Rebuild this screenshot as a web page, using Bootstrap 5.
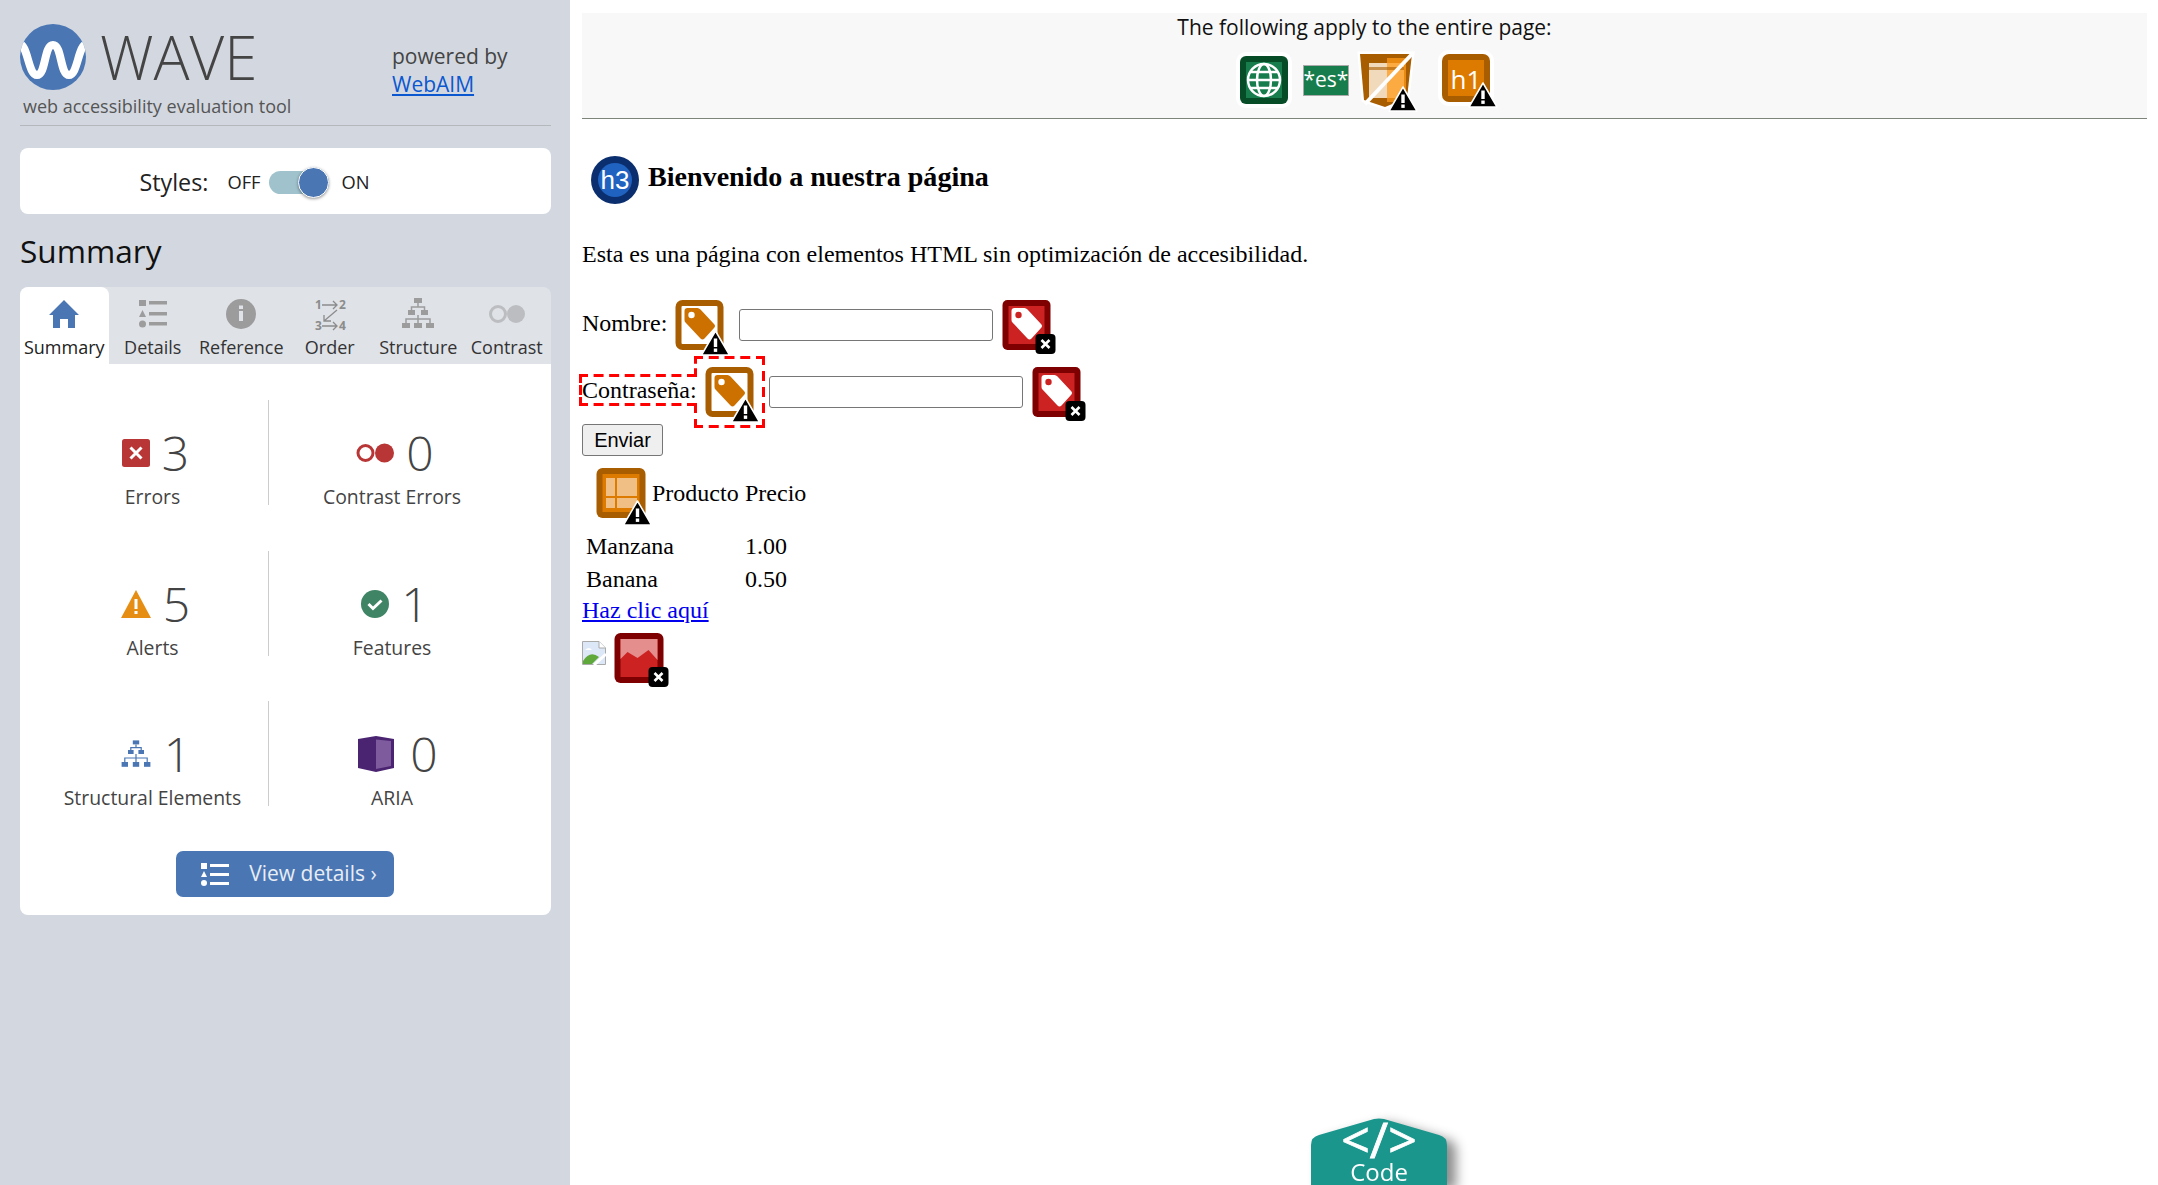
<!DOCTYPE html>
<html lang="en">
<head>
    <meta charset="UTF-8">
    <meta name="viewport" content="width=device-width, initial-scale=1.0">
    <title>WAVE Report</title>
    <link rel="stylesheet" href="https://cdn.jsdelivr.net/npm/bootstrap@5.3.0/dist/css/bootstrap.min.css">
    <style>
        html, body { height: 100%; overflow: hidden; }
        body { font-family: "Liberation Serif", serif; font-size: 24px; color: #000; background: #fff; }
        .wave-shell { height: 1185px; position: relative; }

        /* sidebar */
        .wave-side { width: 570px; flex: none; background: #d3d8e0; padding: 24px 19px 0 20px; font-family: "Open Sans", sans-serif; color: #444; }
        .brand-row { height: 102px; border-bottom: 1px solid #b4b8bd; }
        .brand-left { width: 372px; }
        .brand-top { height: 64px; }
        .brand-name { font-size: 60px; font-weight: 300; line-height: 66px; margin-left: 14px; color: #444; }
        .brand-sub { font-size: 18px; line-height: 24px; margin: 6px 0 0 3px; color: #555; }
        .brand-right { font-size: 21px; line-height: 28px; padding-top: 18px; color: #444; }
        .brand-right a { color: #0b57d0; display: block; }
        .style-box { height: 66px; margin-top: 22px; padding: 2px 62px 0 0; background: #fff; border-radius: 8px; color: #222; }
        .style-word { font-size: 23.3px; margin-right: 19px; }
        .style-state { font-size: 18.3px; }
        .style-track { width: 60px; height: 23px; margin: 0 13px 0 8px; background: #9fc2cc; border-radius: 12px; position: relative; }
        .style-knob { position: absolute; width: 31px; height: 31px; right: 0; top: -4px; background: #4a76b4; border-radius: 50%; border: 1px solid #fff; box-shadow: 0 1px 3px rgba(0,0,0,.4); }
        .side-title { font-size: 31.6px; line-height: 40px; margin: 17px 0 16px; color: #111; font-weight: 400; }
        .tab-bar { background: #dfe2e7; border-radius: 8px 8px 0 0; flex-wrap: nowrap; height: 77px; }
        .tab-bar .nav-link { width: 88.5px; padding: 10px 0 0; text-align: center; font-size: 18px; line-height: 24px; color: #333; white-space: nowrap; border-radius: 8px 8px 0 0; }
        .tab-bar .nav-link.active { background: #fff; color: #222; }
        .tab-bar svg { display: block; margin: 0 auto 2px; width: 40px; height: 36px; }
        .stat-panel { background: #fff; border-radius: 0 0 8px 8px; height: 551px; padding: 36px 0 0 17px; }
        .stat-grid { display: grid; grid-template-columns: 232px 246px; row-gap: 45.5px; }
        .stat-cell { height: 105px; text-align: center; padding-top: 28px; }
        .stat-cell.with-rule { border-right: 1px solid #ccc; }
        .stat-line { padding-left: 6px; }
        .stat-num { font-size: 48px; font-weight: 300; line-height: 50px; color: #444; }
        .stat-name { font-size: 19.4px; line-height: 26px; margin-top: 6px; color: #444; }
        .stat-line svg { flex: none; }
        .aria-line { padding-left: 12px; }
        .aria-num { margin-left: 8px; }
        .details-btn { width: 218px; height: 46px; margin: 45px 0 0 139px; padding: 0 0 0 8px; display: flex; align-items: center; justify-content: center; gap: 20px; background: #4a76b4; border: 0; border-radius: 7px; color: #e8edf4; font-size: 21px; }

        /* page under test */
        .wave-page { flex: 1; padding: 13px 11px 0 12px; }
        .page-wide { height: 106px; background: #f8f8f8; border-bottom: 1px solid #7d857b; font-family: "Open Sans", sans-serif; font-size: 21px; line-height: 28px; text-align: center; color: #111; }
        .page-wide-icons { margin-top: 11px; height: 56px; padding-left: 6px; }
        .page-wide-icons svg { overflow: visible; }
        .lang-tag { width: 46px; height: 31px; background: #177d4c; border: 1px solid #aaa; color: #fff; font-size: 21px; line-height: 26px; margin: 0 10px 0 15px; }
        .icon-spacer { width: 27px; }
        .page-head { font-family: "Liberation Serif", serif; font-size: 28.08px; font-weight: 700; margin: 28px 0 0 8px; height: 60px; color: #000; line-height: 1; }
        .page-head svg { margin: 6px 8px 0 0; }
        .page-text { margin: 32px 0 23px; line-height: 30px; }
        .form-row-raw { line-height: normal; height: 67px; }
        .form-row-raw label { display: inline; }
        .form-row-raw svg { vertical-align: middle; }
        .raw-input { width: 254px; height: 32px; margin-left: 1px; border: 1px solid #767676; border-radius: 3px; vertical-align: middle; background: #fff; }
        .err-icon { margin-left: -5px; }
        .flag-label { outline: 3px dashed #f00; }
        .raw-btn { display: block; width: 81px; height: 32px; margin-top: -2px; padding: 0; border: 1px solid #767676; border-radius: 3px; background: #efefef; font-family: "Liberation Sans", sans-serif; font-size: 20px; color: #000; }
        .raw-table { margin: 1px 0 0 1px; border-collapse: separate; border-spacing: 3px; }
        .raw-table th { font-weight: 400; padding: 0 0 2px; }
        .raw-table th svg { margin: 0 -1px 0 2px; }
        .raw-table td { padding: 0; line-height: 30px; }
        .raw-table th.first { width: 156px; }
        .raw-link { color: #00e; text-decoration: underline; display: block; line-height: 30px; margin-top: -2px; }
        .img-row { height: 66px; }
        .broken-pic { margin-top: 16px; }
        .code-tab { position: absolute; left: 1311px; bottom: 0; width: 150px; height: 67px; overflow: visible; filter: drop-shadow(9px 5px 6px rgba(0,0,0,.45)); }
    </style>
</head>
<body>
    <svg width="0" height="0" class="position-absolute">
        <defs>
            <g id="warn">
                <path d="M13 0 L27 24 H-1 Z" fill="#000" stroke="#fff" stroke-width="1.5" stroke-linejoin="round"/>
                <rect x="11.3" y="7.5" width="3.4" height="8.5" fill="#fff"/>
                <rect x="11.3" y="17.5" width="3.4" height="3.4" fill="#fff"/>
            </g>
            <g id="xbadge">
                <rect x="0" y="0" width="20" height="20" rx="4" fill="#000"/>
                <path d="M6 6 L14 14 M14 6 L6 14" stroke="#fff" stroke-width="2.6"/>
            </g>
            <path id="tagshape" d="M12 8 H22 Q23.500 8 25 9.500 L38.500 24 Q40.500 26 38.500 28 L29 38.500 Q27 40.500 25 38.500 L10 22.500 Q9 21.500 9 20 V11 Q9 8 12 8 Z"/>
            <symbol id="tag-alert" viewBox="0 0 65 66">
                <g transform="translate(8.5 8)">
                    <rect x="3" y="3" width="42" height="44" rx="4" fill="#fff" stroke="#a85d00" stroke-width="6"/>
                    <use href="#tagshape" fill="#cc7000"/>
                    <circle cx="16" cy="15" r="3.200" fill="#fff"/>
                    <use href="#warn" transform="translate(27 31)"/>
                </g>
            </symbol>
            <symbol id="tag-error" viewBox="0 0 65 66">
                <g transform="translate(8.5 8)">
                    <rect width="48" height="50" rx="5" fill="#7f0000"/>
                    <rect x="6" y="6" width="36" height="38" fill="#cc2222"/>
                    <use href="#tagshape" fill="#fff"/>
                    <circle cx="16" cy="15" r="3.200" fill="#cc2222"/>
                    <use href="#xbadge" transform="translate(33 34)"/>
                </g>
            </symbol>
            <symbol id="table-alert" viewBox="0 0 65 66">
                <g transform="translate(8.5 8)">
                    <rect width="49" height="50" rx="6" fill="#a85d00"/>
                    <rect x="6" y="6" width="37" height="38" fill="#dd7b00"/>
                    <rect x="9.500" y="10" width="9" height="18" fill="#efbf85"/>
                    <rect x="20.500" y="10" width="20" height="18" fill="#efbf85"/>
                    <rect x="9.500" y="30" width="9" height="10" fill="#efbf85"/>
                    <rect x="20.500" y="30" width="20" height="10" fill="#efbf85"/>
                    <use href="#warn" transform="translate(28 33)"/>
                </g>
            </symbol>
            <symbol id="img-error" viewBox="0 0 65 66">
                <g transform="translate(8.5 8)">
                    <rect width="49" height="50" rx="6" fill="#7f0000"/>
                    <rect x="6" y="6" width="37" height="38" fill="#cc2222"/>
                    <path d="M6 6 H43 V27 L34 17 L23 25 L13 19 L6 26 Z" fill="#e58e8e"/>
                    <use href="#xbadge" transform="translate(34 34)"/>
                </g>
            </symbol>
        </defs>
    </svg>

    <div class="wave-shell d-flex">
        <aside class="wave-side">
            <div class="brand-row d-flex">
                <div class="brand-left">
                    <div class="brand-top d-flex">
                        <svg width="66" height="66" viewBox="0 0 66 66">
                            <defs><clipPath id="logo-clip"><circle cx="33" cy="33" r="33"/></clipPath></defs>
                            <circle cx="33" cy="33" r="33" fill="#4a76b4"/>
                            <path clip-path="url(#logo-clip)" d="M-1 20 C8 20 8 51 17 51 C26 51 24 21 33 21 C42 21 40 51 49 51 C58 51 58 20 67 20" fill="none" stroke="#fff" stroke-width="8"/>
                        </svg>
                        <span class="brand-name">WAVE</span>
                    </div>
                    <div class="brand-sub">web accessibility evaluation tool</div>
                </div>
                <div class="brand-right">powered by<a href="#">WebAIM</a></div>
            </div>

            <div class="style-box d-flex align-items-center justify-content-center">
                <span class="style-word">Styles:</span>
                <span class="style-state">OFF</span>
                <span class="style-track"><span class="style-knob"></span></span>
                <span class="style-state">ON</span>
            </div>

            <h2 class="side-title">Summary</h2>

            <nav class="nav tab-bar">
                <a class="nav-link active" href="#">
                    <svg viewBox="0 0 40 36"><path d="M20 3 L35 18 H31 V31 H24 V22 H16 V31 H9 V18 H5 Z" fill="#4a76b4"/></svg>
                    Summary
                </a>
                <a class="nav-link" href="#">
                    <svg viewBox="0 0 40 36" fill="#9c9c9c"><rect x="6" y="3" width="7" height="6"/><path d="M9.500 13 L13 20 H6 Z"/><circle cx="9.500" cy="27" r="3.500"/><rect x="16" y="4" width="18" height="3.500"/><rect x="16" y="15" width="18" height="3.500"/><rect x="16" y="25" width="18" height="3.500"/></svg>
                    Details
                </a>
                <a class="nav-link" href="#">
                    <svg viewBox="0 0 40 36"><circle cx="20" cy="17" r="15" fill="#9c9c9c"/><rect x="18" y="14" width="4" height="10" fill="#dfe2e7"/><rect x="18" y="8.500" width="4" height="3.500" fill="#dfe2e7"/></svg>
                    Reference
                </a>
                <a class="nav-link" href="#">
                    <svg viewBox="0 0 40 36">
                        <text x="5" y="12" font-family="Open Sans" font-weight="700" font-size="12" fill="#8c8c8c">1</text>
                        <text x="29" y="12" font-family="Open Sans" font-weight="700" font-size="12" fill="#8c8c8c">2</text>
                        <text x="5" y="33" font-family="Open Sans" font-weight="700" font-size="12" fill="#8c8c8c">3</text>
                        <text x="29" y="33" font-family="Open Sans" font-weight="700" font-size="12" fill="#8c8c8c">4</text>
                        <path d="M12 8 H27 M23 4 L27 8 L23 12 M12 29 H27 M23 25 L27 29 L23 33 M27 13 L14 24 M14 18 V24 H21" fill="none" stroke="#8c8c8c" stroke-width="1.300"/>
                    </svg>
                    Order
                </a>
                <a class="nav-link" href="#">
                    <svg viewBox="0 0 40 36" fill="#9c9c9c"><rect x="16" y="1" width="8" height="5"/><rect x="10" y="13" width="7" height="5"/><rect x="23" y="13" width="7" height="5"/><rect x="4" y="26" width="8" height="5"/><rect x="16" y="26" width="8" height="5"/><rect x="28" y="26" width="8" height="5"/><path d="M20 6 V10 M13.500 13 V10 H26.500 V13 M20 18 V26 M8 26 V22 H32 V26" fill="none" stroke="#9c9c9c" stroke-width="1.500"/></svg>
                    Structure
                </a>
                <a class="nav-link" href="#">
                    <svg viewBox="0 0 40 36"><circle cx="11" cy="17" r="7.500" fill="none" stroke="#bcbdc0" stroke-width="3"/><circle cx="29" cy="17" r="9" fill="#bcbdc0"/></svg>
                    Contrast
                </a>
            </nav>

            <div class="stat-panel">
                <div class="stat-grid">
                    <div class="stat-cell with-rule">
                        <div class="stat-line d-flex align-items-center justify-content-center gap-2">
                            <svg width="28" height="28" viewBox="0 0 28 28"><rect width="28" height="28" rx="2.500" fill="#b93636"/><path d="M8.500 8.500 L19.500 19.500 M19.500 8.500 L8.500 19.500" stroke="#fff" stroke-width="3"/></svg>
                            <span class="stat-num ms-1">3</span>
                        </div>
                        <div class="stat-name">Errors</div>
                    </div>
                    <div class="stat-cell">
                        <div class="stat-line d-flex align-items-center justify-content-center gap-2">
                            <svg width="38" height="20" viewBox="0 0 38 20"><circle cx="9.500" cy="10" r="7.500" fill="none" stroke="#b93636" stroke-width="3"/><circle cx="28.500" cy="10" r="9.500" fill="#b93636"/></svg>
                            <span class="stat-num ms-1">0</span>
                        </div>
                        <div class="stat-name">Contrast Errors</div>
                    </div>
                    <div class="stat-cell with-rule">
                        <div class="stat-line d-flex align-items-center justify-content-center gap-2">
                            <svg width="30" height="28" viewBox="0 0 30 28"><path d="M15 0 L30 28 H0 Z" fill="#e68e13"/><rect x="13.500" y="9" width="3" height="10" fill="#fff"/><rect x="13.500" y="21" width="3" height="3" fill="#fff"/></svg>
                            <span class="stat-num ms-1">5</span>
                        </div>
                        <div class="stat-name">Alerts</div>
                    </div>
                    <div class="stat-cell">
                        <div class="stat-line d-flex align-items-center justify-content-center gap-2">
                            <svg width="28" height="28" viewBox="0 0 28 28"><circle cx="14" cy="14" r="14" fill="#3f8465"/><path d="M7.500 14 L12 18.500 L20.500 10.500" fill="none" stroke="#fff" stroke-width="3"/></svg>
                            <span class="stat-num ms-1">1</span>
                        </div>
                        <div class="stat-name">Features</div>
                    </div>
                    <div class="stat-cell with-rule">
                        <div class="stat-line d-flex align-items-center justify-content-center gap-2">
                            <svg width="32" height="30" viewBox="0 0 40 36" fill="#4a76b4"><rect x="16" y="1" width="8" height="5"/><rect x="10" y="13" width="7" height="5"/><rect x="23" y="13" width="7" height="5"/><rect x="2" y="28" width="8" height="6"/><rect x="16" y="28" width="8" height="6"/><rect x="30" y="28" width="8" height="6"/><path d="M20 6 V10 M13.500 13 V10 H26.500 V13 M20 18 V28 M6 28 V23 H34 V28" fill="none" stroke="#4a76b4" stroke-width="1.500"/></svg>
                            <span class="stat-num ms-1">1</span>
                        </div>
                        <div class="stat-name">Structural Elements</div>
                    </div>
                    <div class="stat-cell">
                        <div class="stat-line aria-line d-flex align-items-center justify-content-center gap-2">
                            <svg width="36" height="36" viewBox="0 0 36 36"><path d="M0 3 L18 0 L36 3 V32 L18 36 L0 32 Z" fill="#4a2371"/><path d="M18 3.500 L33 5 V30 L18 33 Z" fill="#7d5b9c"/></svg>
                            <span class="stat-num aria-num">0</span>
                        </div>
                        <div class="stat-name">ARIA</div>
                    </div>
                </div>
                <button class="btn details-btn" type="button">
                    <svg width="28" height="23" viewBox="0 0 28 23" fill="#fff"><rect width="6" height="6"/><path d="M3 8 L6 14 H0 Z"/><circle cx="3" cy="20" r="3"/><rect x="9" y="1" width="19" height="3"/><rect x="9" y="10" width="19" height="3"/><rect x="9" y="19" width="19" height="3"/></svg>
                    <span>View details ›</span>
                </button>
            </div>
        </aside>

        <main class="wave-page">
            <div class="page-wide">
                The following apply to the entire page:
                <div class="page-wide-icons d-flex justify-content-center align-items-center">
                    <svg width="48" height="48" viewBox="0 0 48 48">
                        <rect width="48" height="48" rx="6" fill="#064d27" stroke="#fff" stroke-width="8" paint-order="stroke"/>
                        <rect x="6" y="6" width="36" height="36" fill="#177d4c"/>
                        <g fill="none" stroke="#fff" stroke-width="2.500">
                            <circle cx="24" cy="24" r="16"/><ellipse cx="24" cy="24" rx="7" ry="16"/>
                            <path d="M8 24 H40 M10 16 H38 M10 32 H38"/>
                        </g>
                    </svg>
                    <span class="lang-tag">*es*</span>
                    <svg width="56" height="56" viewBox="0 0 56 56">
                        <path d="M1 2 H53 L48 46 L26 55 L5 48 Z" fill="#a85d00" stroke="#fff" stroke-width="5" paint-order="stroke"/>
                        <rect x="10" y="11" width="35" height="35" fill="#f1d9bc"/>
                        <rect x="28" y="6" width="19" height="44" fill="#ff9a1a" opacity=".75"/>
                        <rect x="10" y="15" width="35" height="3" fill="#a85d00" opacity=".6"/>
                        <path d="M54 1 L6 52" stroke="#fff" stroke-width="4"/>
                        <use href="#warn" transform="translate(31 35)"/>
                    </svg>
                    <span class="icon-spacer"></span>
                    <svg class="me-n1" width="54" height="54" viewBox="0 0 54 54">
                        <rect x="0" y="1" width="48" height="48" rx="7" fill="#a85d00" stroke="#fff" stroke-width="8" paint-order="stroke"/>
                        <rect x="6" y="7" width="36" height="36" fill="#dd7b00"/>
                        <text x="24" y="36" text-anchor="middle" font-family="Open Sans" font-size="26" fill="#fff">h1</text>
                        <use href="#warn" transform="translate(28 30)"/>
                    </svg>
                </div>
            </div>

            <h3 class="page-head d-flex align-items-center">
                <svg width="50" height="50" viewBox="0 0 50 50">
                    <circle cx="25" cy="25" r="24" fill="#0b2f6e"/>
                    <circle cx="25" cy="25" r="17" fill="#1f62c0"/>
                    <text x="25" y="34" text-anchor="middle" font-family="Liberation Sans" font-weight="400" font-size="26" fill="#fff">h3</text>
                </svg>
                Bienvenido a nuestra página
            </h3>

            <p class="page-text">Esta es una página con elementos HTML sin optimización de accesibilidad.</p>

            <form onsubmit="return false">
                <div class="form-row-raw"><label>Nombre:<svg width="65" height="66"><use href="#tag-alert"/></svg></label> <input class="raw-input" type="text"> <svg class="err-icon" width="65" height="66"><use href="#tag-error"/></svg></div>
                <div class="form-row-raw"><label class="flag-label">Contraseña:<svg width="65" height="66"><use href="#tag-alert"/></svg></label> <input class="raw-input" type="password"> <svg class="err-icon" width="65" height="66"><use href="#tag-error"/></svg></div>
                <button class="raw-btn" type="submit">Enviar</button>
            </form>

            <table class="raw-table">
                <thead>
                    <tr>
                        <th class="first"><span class="d-flex align-items-center"><svg width="65" height="66"><use href="#table-alert"/></svg>Producto</span></th>
                        <th>Precio</th>
                    </tr>
                </thead>
                <tbody>
                    <tr><td>Manzana</td><td>1.00</td></tr>
                    <tr><td>Banana</td><td>0.50</td></tr>
                </tbody>
            </table>

            <a class="raw-link" href="#">Haz clic aquí</a>

            <div class="img-row d-flex align-items-start">
                <svg class="broken-pic" width="24" height="24" viewBox="0 0 24 24">
                    <path d="M.5 .5 H17 L23.500 7 V23.500 H.5 Z" fill="#dce7f8" stroke="#aaa"/>
                    <path d="M17 .5 V7 H23.500" fill="#fff" stroke="#aaa"/>
                    <path d="M3 9 Q7 5 10 9 Z" fill="#fff"/>
                    <path d="M1 20 Q8 9 17 16 L10 23 H1 Z" fill="#5fa83c"/>
                    <path d="M24 13 L12 24" stroke="#fff" stroke-width="3"/>
                </svg>
                <svg class="ms-n1" width="65" height="66"><use href="#img-error"/></svg>
            </div>
        </main>

        <svg class="code-tab" viewBox="0 0 150 67">
            <path d="M0 67 V27 Q0 19 8 17 L63 1 Q68 0 73 1 L128 17 Q136 19 136 27 V67 Z" fill="#1a968d"/>
            <text x="68" y="40" text-anchor="middle" font-family="Open Sans" font-size="50" fill="#fff" stroke="#fff" stroke-width=".8">&lt;/&gt;</text>
            <text x="68" y="63" text-anchor="middle" font-family="Open Sans" font-size="24" fill="#fff">Code</text>
        </svg>
    </div>

    <script src="https://cdn.jsdelivr.net/npm/bootstrap@5.3.0/dist/js/bootstrap.bundle.min.js"></script>
</body>
</html>
